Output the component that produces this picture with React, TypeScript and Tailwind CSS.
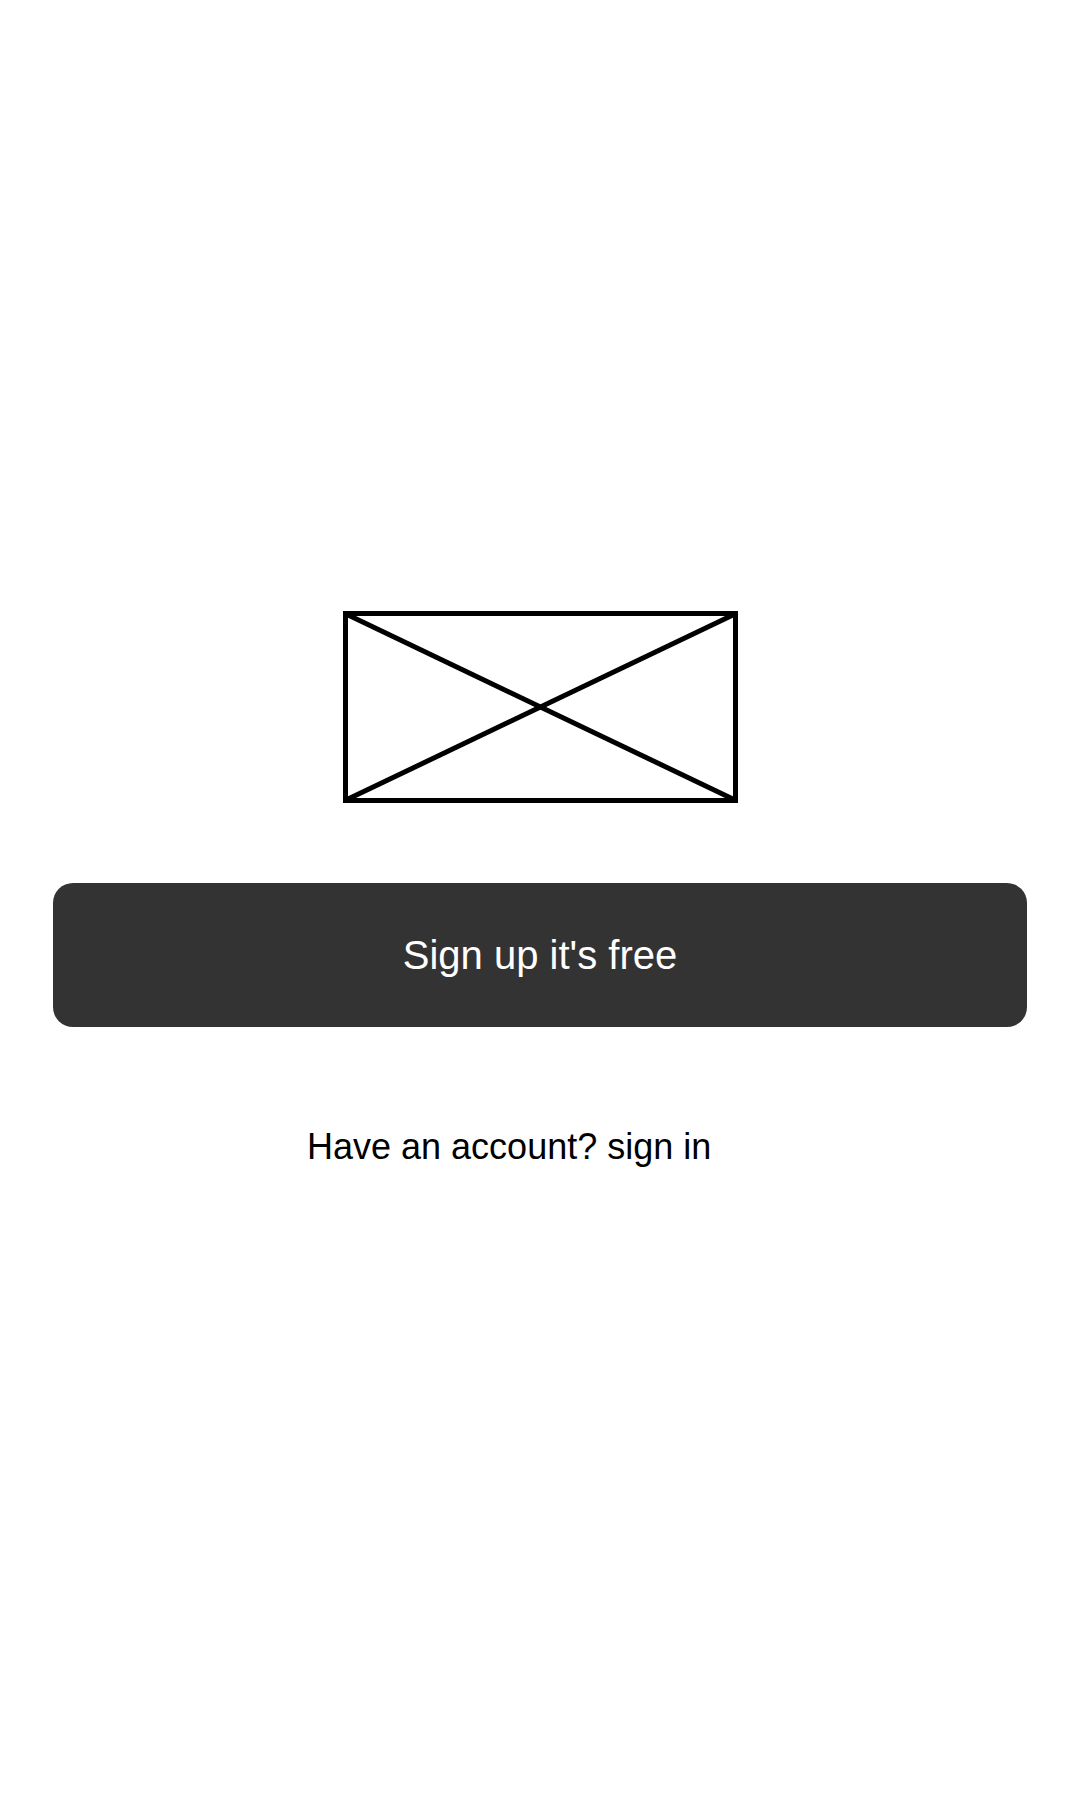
export default function App() {
  return (
    <div className="min-h-[1800px] w-full bg-white flex flex-col pt-[611px] font-['Liberation_Sans',Arial,sans-serif]">
      {/* Image placeholder */}
      <div className="flex justify-center">
        <svg width="395" height="192" viewBox="0 0 395 192" fill="none" stroke="#000" strokeWidth="5">
          <rect x="2.5" y="2.5" width="390" height="187" />
          <line x1="3" y1="3" x2="392" y2="189" />
          <line x1="392" y1="3" x2="3" y2="189" />
        </svg>
      </div>

      <button className="mx-[53px] mt-[80px] h-[144px] rounded-[20px] bg-[#333333] text-white text-[40px] leading-none flex items-center justify-center">
        Sign up it's free
      </button>

      <p className="mt-[102px] ml-[307px] text-[36px] leading-none text-black">
        Have an account? sign in
      </p>
    </div>
  );
}
